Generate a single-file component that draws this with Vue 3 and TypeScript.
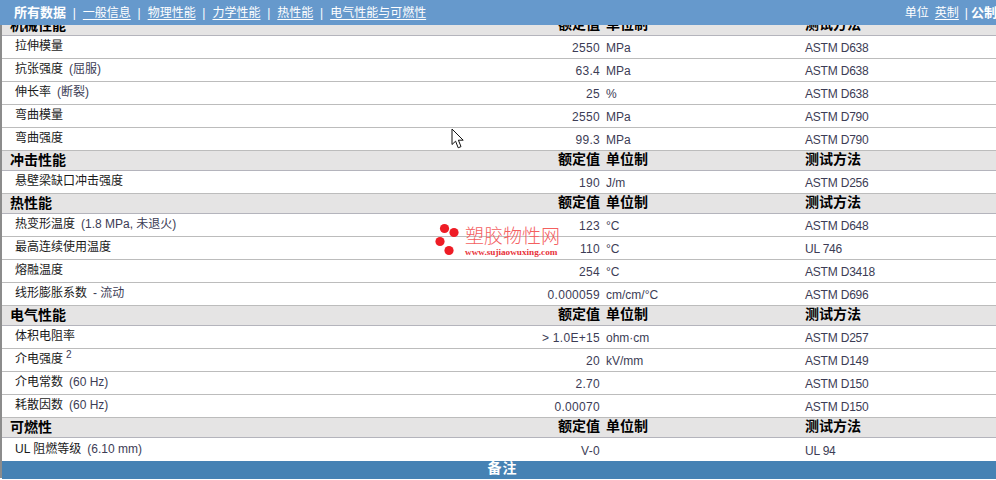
<script setup lang="ts">
interface Row { name: string; note?: string; sup?: string; value: string; unit: string; test: string }
interface Section { title: string; rows: Row[] }

const tabs = ['一般信息', '物理性能', '力学性能', '热性能', '电气性能与可燃性']

const sections: Section[] = [
  { title: '机械性能', rows: [
    { name: '拉伸模量', value: '2550', unit: 'MPa', test: 'ASTM D638' },
    { name: '抗张强度', note: '(屈服)', value: '63.4', unit: 'MPa', test: 'ASTM D638' },
    { name: '伸长率', note: '(断裂)', value: '25', unit: '%', test: 'ASTM D638' },
    { name: '弯曲模量', value: '2550', unit: 'MPa', test: 'ASTM D790' },
    { name: '弯曲强度', value: '99.3', unit: 'MPa', test: 'ASTM D790' },
  ] },
  { title: '冲击性能', rows: [
    { name: '悬壁梁缺口冲击强度', value: '190', unit: 'J/m', test: 'ASTM D256' },
  ] },
  { title: '热性能', rows: [
    { name: '热变形温度', note: '(1.8 MPa, 未退火)', value: '123', unit: '°C', test: 'ASTM D648' },
    { name: '最高连续使用温度', value: '110', unit: '°C', test: 'UL 746' },
    { name: '熔融温度', value: '254', unit: '°C', test: 'ASTM D3418' },
    { name: '线形膨胀系数', note: '- 流动', value: '0.000059', unit: 'cm/cm/°C', test: 'ASTM D696' },
  ] },
  { title: '电气性能', rows: [
    { name: '体积电阻率', value: '> 1.0E+15', unit: 'ohm·cm', test: 'ASTM D257' },
    { name: '介电强度', sup: '2', value: '20', unit: 'kV/mm', test: 'ASTM D149' },
    { name: '介电常数', note: '(60 Hz)', value: '2.70', unit: '', test: 'ASTM D150' },
    { name: '耗散因数', note: '(60 Hz)', value: '0.00070', unit: '', test: 'ASTM D150' },
  ] },
  { title: '可燃性', rows: [
    { name: 'UL 阻燃等级', note: '(6.10 mm)', value: 'V-0', unit: '', test: 'UL 94' },
  ] },
]
</script>

<template>
  <div class="page">
    <nav class="nav">
      <span class="tab active">所有数据</span>
      <template v-for="t in tabs" :key="t">
        <span class="sep">|</span>
        <a class="tab">{{ t }}</a>
      </template>
      <div class="units">
        <span>单位</span>
        <a class="tab">英制</a>
        <span class="sep2">|</span>
        <b class="active">公制</b>
      </div>
    </nav>

    <main class="sheet">
      <section v-for="s in sections" :key="s.title">
        <div class="grid head">
          <span class="title">{{ s.title }}</span>
          <span class="num col">额定值</span>
          <span class="col">单位制</span>
          <span class="col">测试方法</span>
        </div>
        <div v-for="r in s.rows" :key="r.name" class="grid row">
          <span class="name">{{ r.name }}<span v-if="r.note" class="note">{{ r.note }}</span><sup v-if="r.sup">{{ r.sup }}</sup></span>
          <span class="num val">{{ r.value }}</span>
          <span class="val">{{ r.unit }}</span>
          <span class="val test">{{ r.test }}</span>
        </div>
      </section>
      <div class="foot">备注</div>
    </main>

    <div class="mark">
      <svg class="dots" width="28" height="34" viewBox="0 0 28 34">
        <circle cx="9.5" cy="5.5" r="4.6" fill="#ee1c25" />
        <circle cx="19" cy="9.5" r="4.6" fill="#ee1c25" />
        <circle cx="5" cy="18.5" r="4.6" fill="#ee1c25" />
        <circle cx="14" cy="27.5" r="4.6" fill="#ee1c25" />
      </svg>
      <div class="mark-text">
        <div class="mark-cn">塑胶物性网</div>
        <div class="mark-en">www.sujiaowuxing.com</div>
      </div>
    </div>

    <svg class="cursor" width="14" height="22" viewBox="0 0 14 22">
      <path d="M1 1 L1 16.5 L4.6 13.2 L7.2 19.8 L10 18.6 L7.4 12.2 L12.2 12.2 Z" fill="#fff" stroke="#111" stroke-width="1" />
    </svg>
  </div>
</template>

<style>
html, body { margin: 0; overflow: hidden; background: #fff; }
</style>

<style scoped>
.page {
  position: relative;
  width: 996px;
  height: 480px;
  overflow: hidden;
  font: 12px/1 "Liberation Sans", "Noto Sans CJK SC", sans-serif;
  color: #333;
  background: #fff;
}
.nav {
  position: absolute;
  inset: 0 0 auto 0;
  height: 25px;
  z-index: 2;
  display: flex;
  align-items: center;
  padding-left: 14px;
  background: #6699cc;
  color: #fff;
}
.tab { color: #fff; text-decoration: underline; text-underline-offset: 2px; }
.active { font-weight: 700; font-size: 13px; text-decoration: none; }
.sep { margin: 0 7px 0 6.7px; }
.units {
  margin-left: auto;
  margin-right: -1px;
  flex: none;
  display: flex;
  align-items: center;
}
.units .tab { margin-left: 6px; }
.sep2 { margin: 0 3px 0 6px; }
.sheet {
  margin-top: 16px;
  border-left: 2px solid #8c8c8c;
  height: 462px;
  box-sizing: border-box;
}
.grid {
  display: grid;
  grid-template-columns: 392px 200px 193px 1fr;
  column-gap: 6px;
  align-items: center;
}
.head {
  height: 20px;
  box-sizing: border-box;
  background: #e5e4e4;
  border-bottom: 1px solid #b4b4bc;
  color: #000;
  font-size: 14px;
  font-weight: 700;
  padding-bottom: 1px;
}
.col { padding-bottom: 2px; }
.title { padding-left: 8px; }
.row {
  height: 23px;
  box-sizing: border-box;
  padding-top: 2px;
  border-bottom: 1px solid #bcbcbc;
}
section:last-of-type .row:last-child { border-bottom: 0; }
.name { padding-left: 13px; padding-bottom: 4px; color: #1a1a1a; }
.note { margin-left: 6px; color: #3c3c55; }
.val { color: #3c3c55; }
.test { letter-spacing: -0.2px; }
.num.val { letter-spacing: 0.3px; }
sup { font-size: 10px; margin-left: 3px; vertical-align: 5px; line-height: 0; color: #3c3c55; }
.num { text-align: right; }
.foot {
  height: 18px;
  box-sizing: border-box;
  padding-left: 7px;
  background: #4682b4;
  color: #fff;
  font-size: 14px;
  font-weight: 700;
  text-align: center;
  line-height: 15px;
  letter-spacing: 1px;
}
.mark {
  position: absolute;
  left: 435px;
  top: 223px;
  display: flex;
  gap: 2px;
  pointer-events: none;
}
.dots { flex: none; }
.mark-text { padding-top: 3px; }
.mark-cn {
  color: #f4605f;
  font-size: 19px;
  line-height: 21px;
  font-weight: 300;
}
.mark-en {
  color: #e8323a;
  font: 700 9.2px/10px "Liberation Serif", serif;
}
.cursor { position: absolute; left: 451px; top: 128px; }
</style>
